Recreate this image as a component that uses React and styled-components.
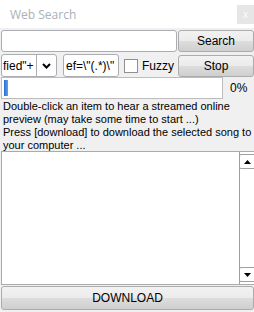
import styled, { createGlobalStyle } from 'styled-components'

const GlobalStyle = createGlobalStyle`
  html, body {
    margin: 0;
    padding: 0;
    background: #f0f0f0;
  }
  body {
    font-family: 'Liberation Sans', Arial, sans-serif;
    font-size: 11px;
    color: #000;
  }
`

const Window = styled.div`
  width: 254px;
  height: 312px;
  display: flex;
  flex-direction: column;
  background: #f0f0f0;
  overflow: hidden;
`

const TitleBar = styled.div`
  height: 28px;
  flex: none;
  background: #fff;
  display: flex;
  align-items: flex-start;
  justify-content: space-between;
`

const Title = styled.span`
  margin: 6px 0 0 10px;
  font-family: 'Open Sans', 'Liberation Sans', sans-serif;
  font-size: 12px;
  color: #a9b1b9;
`

const CloseBox = styled.div`
  width: 17px;
  height: 19px;
  margin-top: 5px;
  background: #e6e6e6;
  color: #fafafa;
  font-size: 10px;
  display: flex;
  align-items: center;
  justify-content: center;
`

const Row = styled.div`
  display: flex;
  align-items: center;
  height: ${(p) => p.$h}px;
  margin-top: ${(p) => p.$mt || 0}px;
  padding-left: 1px;
  gap: ${(p) => p.$gap || 0}px;
`

const TextBox = styled.div`
  box-sizing: border-box;
  height: ${(p) => p.$h || 22}px;
  width: ${(p) => p.$w}px;
  background: #fff;
  border: 1px solid #abadb3;
  border-radius: 3px;
  display: flex;
  align-items: center;
  overflow: hidden;
  white-space: nowrap;
  font-size: 12px;
  padding-left: 2px;
`

const Button = styled.div`
  box-sizing: border-box;
  height: ${(p) => p.$h || 22}px;
  width: ${(p) => p.$w}px;
  margin-left: auto;
  border: 1px solid #acacac;
  border-radius: 3px;
  background: linear-gradient(#f2f2f2, #ebebeb 50%, #dddddd 51%, #cfcfcf);
  display: flex;
  align-items: center;
  justify-content: center;
  font-size: 12px;
`

const Combo = styled.div`
  box-sizing: border-box;
  width: 56px;
  height: 23px;
  display: flex;
  background: #fff;
  border: 1px solid #abadb3;
  border-radius: 3px;
  overflow: hidden;
`

const ComboText = styled.div`
  flex: 1;
  display: flex;
  align-items: center;
  padding-left: 1px;
  font-size: 12px;
  white-space: nowrap;
  overflow: hidden;
`

const ComboArrow = styled.div`
  width: 19px;
  border-left: 1px solid #abadb3;
  display: flex;
  align-items: center;
  justify-content: center;
`

const Check = styled.div`
  width: 12px;
  height: 12px;
  border: 1px solid #8f8f8f;
  background: #fff;
  margin-left: 5px;
`

const CheckLabel = styled.span`
  font-size: 12px;
  margin-left: 4px;
`

const Progress = styled.div`
  box-sizing: border-box;
  width: 222px;
  height: 22px;
  border: 1px solid #bcbcbc;
  background: #fff;
  padding: 2px;
  display: flex;
`

const Chunk = styled.div`
  width: 4px;
  background: linear-gradient(90deg, #2a6fd0, #5fa0ec);
`

const Percent = styled.span`
  font-size: 12px;
  margin-left: 7px;
`

const Help = styled.div`
  padding: 1px 0 0 3px;
  line-height: 13px;
  font-size: 11px;
  color: #000;
  height: 51px;
`

const List = styled.div`
  box-sizing: border-box;
  height: 134px;
  margin-left: 1px;
  border: 1px solid #ababab;
  border-right: none;
  background: #fff;
  display: flex;
  justify-content: flex-end;
`

const Scroll = styled.div`
  width: 14px;
  border-left: 1px solid #a0a0a0;
  background: #fff;
  display: flex;
  flex-direction: column;
  justify-content: space-between;
  padding: 2px 0;
`

const ScrollBtn = styled.div`
  height: 13px;
  border: 1px solid #a0a0a0;
  border-right: none;
  border-radius: 2px 0 0 2px;
  margin-left: -1px;
  display: flex;
  align-items: center;
  justify-content: center;
`

const DownloadBar = styled.div`
  margin-top: 1px;
  padding-left: 1px;
`

const Arrow = ({ up }) => (
  <svg width="7" height="4" viewBox="0 0 7 4">
    <path d={up ? 'M0 4 L3.5 0 L7 4 Z' : 'M0 0 L3.5 4 L7 0 Z'} fill="#000" />
  </svg>
)

export default function App() {
  return (
    <>
      <GlobalStyle />
      <Window>
        <TitleBar>
          <Title>Web Search</Title>
          <CloseBox>x</CloseBox>
        </TitleBar>
        <Row $h={22} $mt={2}>
          <TextBox $w={176} />
          <Button $w={76}>Search</Button>
        </Row>
        <Row $h={23} $mt={2}>
          <Combo>
            <ComboText>fied"+</ComboText>
            <ComboArrow>
              <svg width="9" height="6" viewBox="0 0 9 6">
                <path d="M1 1 L4.5 4.5 L8 1" stroke="#000" strokeWidth="2" fill="none" />
              </svg>
            </ComboArrow>
          </Combo>
          <TextBox $w={56} $h={23} style={{ marginLeft: 6 }}>
            ef=\"(.*)\"
          </TextBox>
          <Check />
          <CheckLabel>Fuzzy</CheckLabel>
          <Button $w={76}>Stop</Button>
        </Row>
        <Row $h={22} $mt={0}>
          <Progress>
            <Chunk />
          </Progress>
          <Percent>0%</Percent>
        </Row>
        <Help>
          Double-click an item to hear a streamed online
          <br />
          preview (may take some time to start ...)
          <br />
          Press [download] to download the selected song to
          <br />
          your computer ...
        </Help>
        <List>
          <Scroll>
            <ScrollBtn>
              <Arrow up />
            </ScrollBtn>
            <ScrollBtn>
              <Arrow />
            </ScrollBtn>
          </Scroll>
        </List>
        <DownloadBar>
          <Button $w={253} $h={24}>DOWNLOAD</Button>
        </DownloadBar>
      </Window>
    </>
  )
}
